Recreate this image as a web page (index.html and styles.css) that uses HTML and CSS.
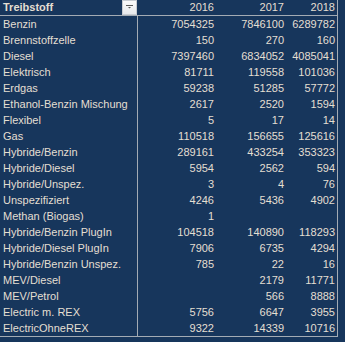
FILE: index.html
```html
<!DOCTYPE html>
<html>
<head>
<meta charset="utf-8">
<link rel="stylesheet" href="styles.css">
</head>
<body>
<div class="sheet">
  <div class="grid">
    <div class="hd first"><span class="label">Treibstoff</span><span class="filter"><svg width="9" height="6" viewBox="0 0 9 6"><rect x="1" y="0" width="7" height="1" fill="#5a5a5a"/><path d="M3 2 H6 L4.5 3.5 Z" fill="#5a5a5a"/></svg></span></div>
    <div class="hd num">2016</div><div class="hd num">2017</div><div class="hd num last">2018</div>

    <div class="c name">Benzin</div><div class="c num">7054325</div><div class="c num">7846100</div><div class="c num last">6289782</div>
    <div class="c name">Brennstoffzelle</div><div class="c num">150</div><div class="c num">270</div><div class="c num last">160</div>
    <div class="c name">Diesel</div><div class="c num">7397460</div><div class="c num">6834052</div><div class="c num last">4085041</div>
    <div class="c name">Elektrisch</div><div class="c num">81711</div><div class="c num">119558</div><div class="c num last">101036</div>
    <div class="c name">Erdgas</div><div class="c num">59238</div><div class="c num">51285</div><div class="c num last">57772</div>
    <div class="c name">Ethanol-Benzin Mischung</div><div class="c num">2617</div><div class="c num">2520</div><div class="c num last">1594</div>
    <div class="c name">Flexibel</div><div class="c num">5</div><div class="c num">17</div><div class="c num last">14</div>
    <div class="c name">Gas</div><div class="c num">110518</div><div class="c num">156655</div><div class="c num last">125616</div>
    <div class="c name">Hybride/Benzin</div><div class="c num">289161</div><div class="c num">433254</div><div class="c num last">353323</div>
    <div class="c name">Hybride/Diesel</div><div class="c num">5954</div><div class="c num">2562</div><div class="c num last">594</div>
    <div class="c name">Hybride/Unspez.</div><div class="c num">3</div><div class="c num">4</div><div class="c num last">76</div>
    <div class="c name">Unspezifiziert</div><div class="c num">4246</div><div class="c num">5436</div><div class="c num last">4902</div>
    <div class="c name">Methan (Biogas)</div><div class="c num">1</div><div class="c num"></div><div class="c num last"></div>
    <div class="c name">Hybride/Benzin PlugIn</div><div class="c num">104518</div><div class="c num">140890</div><div class="c num last">118293</div>
    <div class="c name">Hybride/Diesel PlugIn</div><div class="c num">7906</div><div class="c num">6735</div><div class="c num last">4294</div>
    <div class="c name">Hybride/Benzin Unspez.</div><div class="c num">785</div><div class="c num">22</div><div class="c num last">16</div>
    <div class="c name">MEV/Diesel</div><div class="c num"></div><div class="c num">2179</div><div class="c num last">11771</div>
    <div class="c name">MEV/Petrol</div><div class="c num"></div><div class="c num">566</div><div class="c num last">8888</div>
    <div class="c name">Electric m. REX</div><div class="c num">5756</div><div class="c num">6647</div><div class="c num last">3955</div>
    <div class="c name">ElectricOhneREX</div><div class="c num">9322</div><div class="c num">14339</div><div class="c num last">10716</div>
  </div>
</div>
</body>
</html>
```

FILE: styles.css
```css
html, body {
  margin: 0;
  padding: 0;
  background: #17365c;
  width: 345px;
  height: 342px;
  overflow: hidden;
}

.sheet {
  font-family: "Liberation Sans", Arial, sans-serif;
  font-size: 11px;
  color: #e4dfd2;
}

.grid {
  display: grid;
  grid-template-columns: 138px 78px 70px 52px;
  grid-template-rows: 16px repeat(20, 16px);
  width: 338px;
  border-bottom: 1px solid #a3abb4;
}

.hd {
  height: 15px;
  border-bottom: 1px solid #a3abb4;
  line-height: 15px;
  white-space: nowrap;
}

.hd.first {
  display: flex;
  align-items: flex-start;
  justify-content: space-between;
  padding-left: 3px;
  padding-right: 1px;
}

.label {
  font-weight: bold;
}

.filter {
  width: 13px;
  height: 13px;
  background: linear-gradient(#fbfbfb, #e6e8ec);
  border: 1px solid #c8ccd2;
  display: flex;
  align-items: center;
  justify-content: center;
}

.c {
  height: 16px;
  line-height: 16px;
  white-space: nowrap;
  overflow: hidden;
}

.name {
  padding-left: 3px;
  border-right: 1px solid #a3abb4;
}

.num {
  text-align: right;
  padding-right: 2px;
}

.last {
  border-right: 1px solid #a3abb4;
}
```
